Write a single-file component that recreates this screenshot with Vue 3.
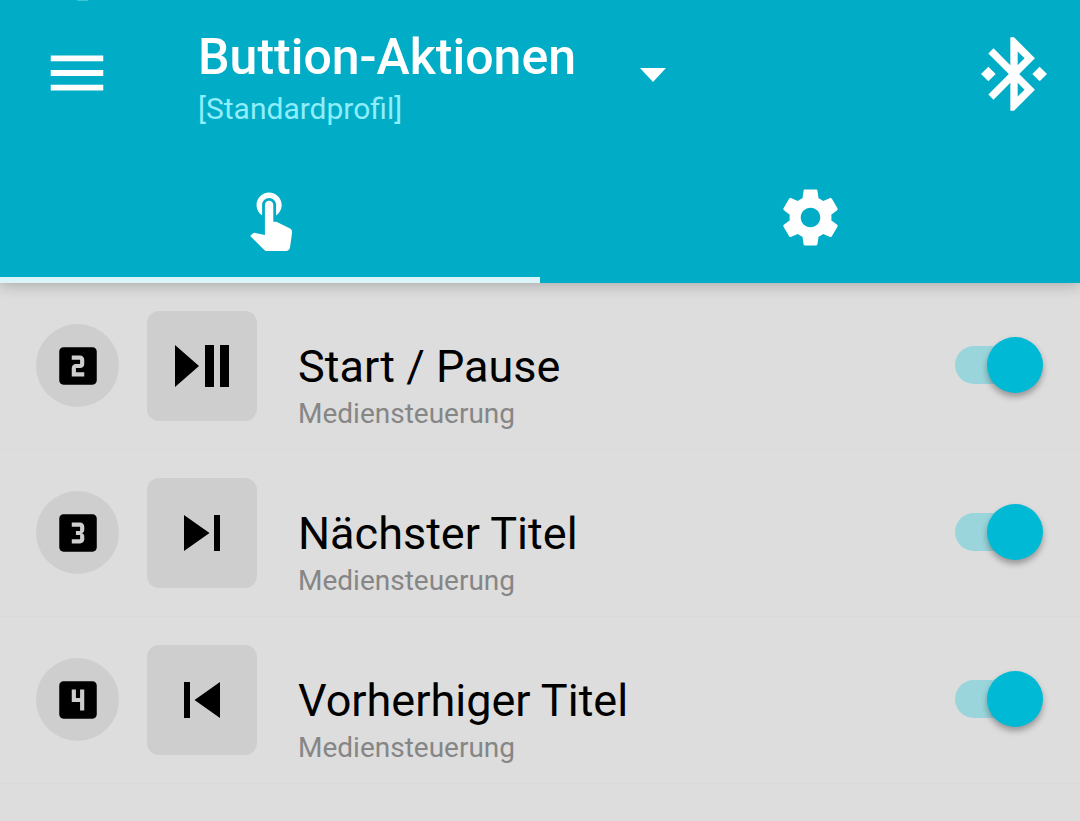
<script setup>
import { ref } from 'vue'

const activeTab = ref('actions')

const digitPaths = {
  2: 'M19 3H5c-1.1 0-2 .9-2 2v14c0 1.1.9 2 2 2h14c1.1 0 2-.9 2-2V5c0-1.1-.9-2-2-2zm-4 8c0 1.11-.9 2-2 2h-2v2h4v2H9v-4c0-1.11.9-2 2-2h2V9H9V7h4c1.1 0 2 .89 2 2v2z',
  3: 'M19.01 3h-14c-1.1 0-2 .9-2 2v14c0 1.1.9 2 2 2h14c1.1 0 2-.9 2-2V5c0-1.1-.9-2-2-2zm-4 7.5c0 .83-.67 1.5-1.5 1.5.83 0 1.5.67 1.5 1.5V15c0 1.11-.9 2-2 2h-4v-2h4v-2h-2v-2h2V9h-4V7h4c1.1 0 2 .89 2 2v1.5z',
  4: 'M19 3H5c-1.1 0-2 .9-2 2v14c0 1.1.9 2 2 2h14c1.1 0 2-.9 2-2V5c0-1.1-.9-2-2-2zm-4 14h-2v-4H9V7h2v4h2V7h2v10z'
}

const actions = ref([
  { key: 2, icon: 'playpause', title: 'Start / Pause', group: 'Mediensteuerung', on: true },
  { key: 3, icon: 'next', title: 'Nächster Titel', group: 'Mediensteuerung', on: true },
  { key: 4, icon: 'previous', title: 'Vorherhiger Titel', group: 'Mediensteuerung', on: true }
])
</script>

<template>
  <div class="screen">
    <header class="appbar">
      <div class="toolbar">
        <button class="icon-button menu" type="button" aria-label="Menü">
          <svg width="70" height="70" viewBox="0 0 24 24"><path d="M3 18h18v-2H3v2zm0-5h18v-2H3v2zm0-7v2h18V6H3z" /></svg>
        </button>
        <button class="profile" type="button" aria-haspopup="listbox">
          <span class="profile-text">
            <span class="title">Buttion-Aktionen</span>
            <span class="subtitle">[Standardprofil]</span>
          </span>
          <svg class="caret" width="26" height="14" viewBox="0 0 26 14"><path d="M0 0h26L13 14z" /></svg>
        </button>
        <button class="icon-button bluetooth" type="button" aria-label="Bluetooth">
          <svg width="88" height="88" viewBox="0 0 24 24"><path d="M7 12l-2-2-2 2 2 2 2-2zm10.71-4.29L12 2h-1v7.59L6.41 5 5 6.41 10.59 12 5 17.59 6.41 19 11 14.41V22h1l5.71-5.71-4.3-4.29 4.3-4.29zM13 5.83l1.88 1.88L13 9.59V5.83zm1.88 10.46L13 18.17v-3.76l1.88 1.88zM19 10l-2 2 2 2 2-2-2-2z" /></svg>
        </button>
        <span class="status-sliver"></span>
      </div>
      <nav class="tabs" role="tablist">
        <button
          class="tab" :class="{ active: activeTab === 'actions' }" type="button" role="tab"
          :aria-selected="activeTab === 'actions'" aria-label="Aktionen" @click="activeTab = 'actions'"
        >
          <svg width="67" height="67" viewBox="0 0 24 24"><path d="M9 11.24V7.5C9 6.12 10.12 5 11.5 5S14 6.12 14 7.5v3.74c1.21-.81 2-2.18 2-3.74C16 5.01 13.99 3 11.5 3S7 5.01 7 7.5c0 1.56.79 2.93 2 3.74zm9.84 4.63l-4.54-2.26c-.17-.07-.35-.11-.54-.11H13v-6c0-.83-.67-1.5-1.5-1.5S10 6.67 10 7.5v10.74l-3.43-.72c-.08-.01-.15-.03-.24-.03-.31 0-.59.13-.79.33l-.79.8 4.94 4.94c.27.27.65.44 1.06.44h6.79c.75 0 1.33-.55 1.44-1.28l.75-5.27c.01-.07.02-.14.02-.2 0-.62-.38-1.16-.91-1.38z" /></svg>
        </button>
        <button
          class="tab" :class="{ active: activeTab === 'settings' }" type="button" role="tab"
          :aria-selected="activeTab === 'settings'" aria-label="Einstellungen" @click="activeTab = 'settings'"
        >
          <svg width="67" height="67" viewBox="0 0 24 24"><path d="M19.43 12.98c.04-.32.07-.64.07-.98s-.03-.66-.07-.98l2.11-1.65c.19-.15.24-.42.12-.64l-2-3.46c-.12-.22-.39-.3-.61-.22l-2.49 1c-.52-.4-1.08-.73-1.69-.98l-.38-2.65C14.46 2.18 14.25 2 14 2h-4c-.25 0-.46.18-.49.42l-.38 2.65c-.61.25-1.17.59-1.69.98l-2.49-1c-.23-.09-.49 0-.61.22l-2 3.46c-.13.22-.07.49.12.64l2.11 1.65c-.04.32-.07.65-.07.98s.03.66.07.98l-2.11 1.65c-.19.15-.24.42-.12.64l2 3.46c.12.22.39.3.61.22l2.49-1c.52.4 1.08.73 1.69.98l.38 2.65c.03.24.24.42.49.42h4c.25 0 .46-.18.49-.42l.38-2.65c.61-.25 1.17-.59 1.69-.98l2.49 1c.23.09.49 0 .61-.22l2-3.46c.12-.22.07-.49-.12-.64l-2.11-1.65zM12 15.5c-1.93 0-3.5-1.57-3.5-3.5s1.57-3.5 3.5-3.5 3.5 1.57 3.5 3.5-1.57 3.5-3.5 3.5z" /></svg>
        </button>
      </nav>
    </header>

    <ul class="list">
      <li v-for="action in actions" :key="action.key" class="row">
        <span class="badge">
          <svg width="50" height="50" viewBox="0 0 24 24" role="img" :aria-label="'Taste ' + action.key"><path :d="digitPaths[action.key]" /></svg>
        </span>
        <span class="tile">
          <svg v-if="action.icon === 'playpause'" width="54" height="42" viewBox="0 0 18 14"><path d="M0 0l8 7-8 7zM10 0h3v14h-3zM15 0h3v14h-3z" /></svg>
          <svg v-else-if="action.icon === 'next'" width="72" height="72" viewBox="0 0 24 24"><path d="M6 18l8.5-6L6 6v12zM16 6v12h2V6h-2z" /></svg>
          <svg v-else width="72" height="72" viewBox="0 0 24 24"><path d="M6 6h2v12H6zm3.5 6l8.5 6V6z" /></svg>
        </span>
        <label class="label" :for="'action-' + action.key">
          <span class="name">{{ action.title }}</span>
          <span class="group">{{ action.group }}</span>
        </label>
        <input :id="'action-' + action.key" v-model="action.on" class="switch" type="checkbox" role="switch">
      </li>
    </ul>
  </div>
</template>

<style>
body {
  margin: 0;
  background: #dddddd;
}
</style>

<style scoped>
.screen {
  min-height: 100vh;
  background: #dddddd;
  color: #000000;
  font-family: Roboto, "Noto Sans", sans-serif;
}

svg {
  display: block;
  fill: currentColor;
  flex: none;
}

button {
  margin: 0;
  padding: 0;
  border: 0;
  background: none;
  color: inherit;
  font: inherit;
  cursor: pointer;
}

.appbar {
  position: relative;
  background: #00acc6;
  color: #ffffff;
  box-shadow: 0 2px 14px rgba(0, 0, 0, 0.24);
}

.toolbar {
  display: flex;
  align-items: center;
  height: 146px;
  padding: 0 22px 0 42px;
}

.profile {
  display: flex;
  align-items: center;
  gap: 64px;
  margin-left: 86px;
  text-align: left;
}

.profile-text {
  display: flex;
  flex-direction: column;
  gap: 5px;
  padding-top: 9px;
}

.title {
  font-size: 50px;
  font-weight: 500;
  line-height: 58px;
}

.subtitle {
  color: #8eeefb;
  font-size: 30px;
  line-height: 36px;
}

.caret {
  margin-top: 4px;
}

.bluetooth {
  margin-left: auto;
  padding-top: 2px;
}

.status-sliver {
  position: absolute;
  top: 0;
  left: 77px;
  width: 11px;
  height: 1px;
  border-radius: 0 0 5px 5px;
  background: #3fc6da;
}

.tabs {
  display: flex;
  height: 137px;
}

.tab {
  display: flex;
  flex: 1;
  align-items: center;
  justify-content: center;
  padding-top: 12px;
  border-bottom: 6px solid transparent;
}

.tab.active {
  border-bottom-color: #daf4f7;
}

.list {
  margin: 0;
  padding: 0;
  list-style: none;
}

.row {
  display: flex;
  align-items: center;
  box-sizing: border-box;
  height: 167px;
  padding: 0 37px 0 36px;
  border-bottom: 1px solid #dadada;
}

.badge,
.tile {
  display: flex;
  flex: none;
  align-items: center;
  justify-content: center;
  background: #cecece;
}

.badge {
  width: 83px;
  height: 83px;
  margin-bottom: 1px;
  border-radius: 50%;
}

.tile {
  width: 110px;
  height: 110px;
  margin-left: 28px;
  border-radius: 12px;
}

.label {
  display: flex;
  flex: 1;
  flex-direction: column;
  gap: 3px;
  min-width: 0;
  margin-left: 41px;
  padding-top: 39px;
}

.name {
  font-size: 45px;
  line-height: 54px;
}

.group {
  color: #868686;
  font-size: 28px;
  line-height: 34px;
}

.switch {
  position: relative;
  flex: none;
  width: 88px;
  height: 56px;
  margin: 0 0 2px;
  appearance: none;
  cursor: pointer;
}

.switch::before {
  content: "";
  position: absolute;
  inset: 9px 8px 9px 0;
  border-radius: 19px;
  background: #b5b5b5;
}

.switch::after {
  content: "";
  position: absolute;
  top: 0;
  left: 0;
  width: 56px;
  height: 56px;
  border-radius: 50%;
  background: #f1f1f1;
  box-shadow: 0 4px 6px rgba(0, 0, 0, 0.32);
}

.switch:checked::before {
  background: #9ad5db;
}

.switch:checked::after {
  left: 32px;
  background: #00b9d4;
}
</style>
